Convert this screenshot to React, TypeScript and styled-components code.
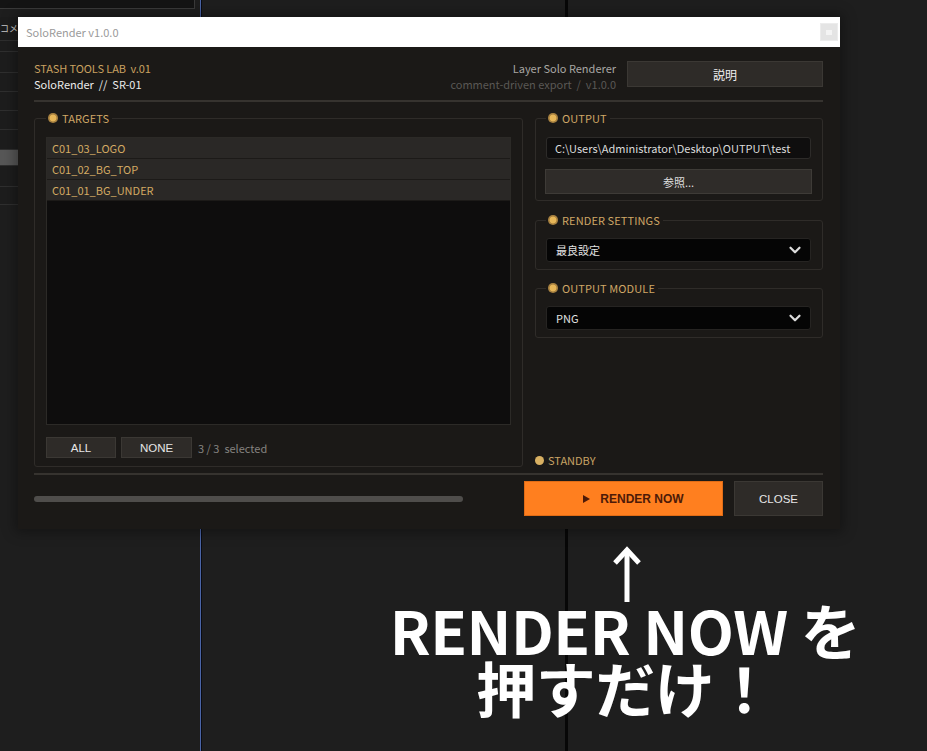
import React from "react";
import styled, { createGlobalStyle } from "styled-components";
import { ChevronDown } from "lucide-react";

const UI = `"Noto Sans CJK JP", "Noto Sans", sans-serif`;
const ARIAL = `"Liberation Sans", Arial, sans-serif`;

const GlobalStyle = createGlobalStyle`
  html, body { margin: 0; padding: 0; background: #1e1e1e; }
  body { width: 927px; height: 751px; overflow: hidden; }
  * { box-sizing: border-box; }
`;

const Desktop = styled.div`
  position: relative;
  width: 927px;
  height: 751px;
  background: #1e1e1e;
  overflow: hidden;
  font-family: ${UI};
`;

/* ---------- background application panels ---------- */
const TopLeftPanel = styled.div`
  position: absolute;
  left: 0;
  top: 0;
  width: 195px;
  height: 9px;
  background: #141414;
  border-right: 1px solid #3a3a3a;
  border-bottom: 1px solid #3a3a3a;
`;

const SidePanel = styled.div`
  position: absolute;
  left: 0;
  top: 17px;
  width: 18px;
  display: flex;
  flex-direction: column;
`;

const SideHeader = styled.div`
  height: 24px;
  display: flex;
  align-items: center;
  white-space: nowrap;
  font-family: ${UI};
  font-size: 9px;
  color: #c8c8c8;
  background: #1c1c1c;
  border-bottom: 1px solid #2e2e2e;
`;

const SideRow = styled.div<{ $h: number; $hl?: boolean }>`
  height: ${(p) => p.$h}px;
  background: ${(p) => (p.$hl ? "#575757" : "#1d1d1d")};
  border-bottom: 1px solid #2f2f2f;
`;

const VLine = styled.div<{ $x: number; $w: number; $c: string; $edge?: string }>`
  position: absolute;
  top: 0;
  bottom: 0;
  left: ${(p) => p.$x}px;
  width: ${(p) => p.$w}px;
  background: ${(p) => p.$c};
  border-left: ${(p) => (p.$edge ? `1px solid ${p.$edge}` : "none")};
`;

/* ---------- dialog window ---------- */
const Window = styled.div`
  position: absolute;
  left: 18px;
  top: 17px;
  width: 822px;
  display: flex;
  flex-direction: column;
  box-shadow: 0 0 12px 3px rgba(0, 0, 0, 0.35);
`;

const TitleBar = styled.div`
  height: 30px;
  background: #ffffff;
  display: flex;
  align-items: center;
  justify-content: space-between;
  padding: 0 2px 0 8px;
`;

const TitleText = styled.span`
  font-family: ${UI};
  font-size: 11px;
  color: #9a9a9a;
`;

const CloseBox = styled.div`
  width: 18px;
  height: 18px;
  background: #e4e4e4;
  border: 1px solid #ececec;
  display: flex;
  align-items: center;
  justify-content: center;
  &::after {
    content: "";
    width: 6px;
    height: 5px;
    background: #f4f4f4;
  }
`;

const Body = styled.div`
  background: #1b1917;
  padding: 13px 17px 13px 16px;
  display: flex;
  flex-direction: column;
`;

const Header = styled.div`
  height: 32px;
  display: flex;
  justify-content: space-between;
  align-items: flex-start;
`;

const Brand = styled.div`
  display: flex;
  flex-direction: column;
  font-size: 11px;
  line-height: 16px;
`;

const BrandTop = styled.span`
  color: #c9a160;
  white-space: pre;
  letter-spacing: -0.1px;
`;

const BrandSub = styled.span`
  color: #ececec;
  white-space: pre;
`;

const HeaderRight = styled.div`
  display: flex;
  gap: 11px;
  align-items: flex-start;
`;

const Meta = styled.div`
  display: flex;
  flex-direction: column;
  align-items: flex-end;
  font-size: 11px;
  line-height: 16px;
`;

const MetaTitle = styled.span`
  color: #a9a7a4;
`;

const MetaSub = styled.span`
  color: #5a5855;
  white-space: pre;
`;

const PlainButton = styled.button<{ $w?: number; $h: number; $arial?: boolean }>`
  width: ${(p) => (p.$w ? `${p.$w}px` : "100%")};
  height: ${(p) => p.$h}px;
  margin: 0;
  padding: 0;
  background: #2e2b28;
  border: 1px solid #3b3834;
  color: #e6e6e6;
  font-family: ${(p) => (p.$arial ? ARIAL : UI)};
  font-size: ${(p) => (p.$arial ? "11.5px" : "11px")};
  display: flex;
  align-items: center;
  justify-content: center;
  cursor: pointer;
`;

const HelpButton = styled(PlainButton)`
  margin-top: 1px;
  font-size: 12px;
  color: #f0f0f0;
`;

const Divider = styled.div<{ $mt: number; $mb: number }>`
  height: 2px;
  background: #36332f;
  margin-top: ${(p) => p.$mt}px;
  margin-bottom: ${(p) => p.$mb}px;
`;

const Main = styled.div`
  display: grid;
  grid-template-columns: 489px 288px;
  column-gap: 12px;
`;

const Group = styled.fieldset<{ $pad: string; $mt?: number }>`
  margin: ${(p) => p.$mt ?? 0}px 0 0 0;
  min-width: 0;
  border: 1px solid #2f2c29;
  border-radius: 3px;
  padding: ${(p) => p.$pad};
  display: flex;
  flex-direction: column;
`;

const Legend = styled.legend`
  padding: 0 3px 0 2px;
  display: flex;
  align-items: center;
  gap: 4px;
  font-size: 11px;
  line-height: 14px;
  color: #d0a766;
  letter-spacing: 0.1px;
`;

const Dot = styled.span`
  width: 10px;
  height: 10px;
  border-radius: 50%;
  background: radial-gradient(circle, #e6b658 0 45%, #a98240 52% 68%, #d9ad58 75% 100%);
  flex: none;
`;

const TargetList = styled.div`
  height: 288px;
  background: #0e0d0d;
  border: 1px solid #2c2a27;
  display: flex;
  flex-direction: column;
`;

const TargetRow = styled.div`
  height: 21px;
  background: #2a2826;
  border-bottom: 1px solid #1c1a18;
  display: flex;
  align-items: center;
  padding-left: 5px;
  font-size: 11px;
  color: #d3aa63;
`;

const ListActions = styled.div`
  margin-top: 12px;
  display: flex;
  align-items: center;
  gap: 5px;
`;

const SelectedCount = styled.span`
  margin-left: 1px;
  font-size: 11px;
  color: #858380;
  white-space: pre;
`;

const RightColumn = styled.div`
  display: flex;
  flex-direction: column;
`;

const PathInput = styled.div`
  height: 22px;
  background: #0f0e0e;
  border: 1px solid #2d2b29;
  border-radius: 3px;
  display: flex;
  align-items: center;
  padding-left: 8px;
  font-size: 11px;
  color: #dcdcdc;
  white-space: nowrap;
  overflow: hidden;
`;

const BrowseButton = styled(PlainButton)`
  margin-top: 10px;
  width: auto;
  margin-left: -1px;
  margin-right: -1px;
  background: #2f2c29;
  border-color: #3e3b37;
  color: #dedede;
`;

const Select = styled.div`
  height: 24px;
  background: #050505;
  border: 1px solid #262422;
  border-radius: 3px;
  display: flex;
  align-items: center;
  justify-content: space-between;
  padding: 0 6px 0 9px;
  font-size: 11px;
  color: #e2e2e2;
  svg {
    color: #dcdcdc;
  }
`;

const Status = styled.div`
  margin-top: auto;
  height: 14px;
  display: flex;
  align-items: center;
  gap: 4px;
  font-size: 11px;
  color: #c9a465;
`;

const StatusDot = styled.span`
  width: 9px;
  height: 9px;
  border-radius: 50%;
  background: #d8b062;
`;

const Footer = styled.div`
  display: flex;
  align-items: center;
  justify-content: space-between;
`;

const ProgressTrack = styled.div`
  width: 429px;
  height: 6px;
  border-radius: 3px;
  background: #4f4d4b;
`;

const FooterButtons = styled.div`
  display: flex;
  gap: 11px;
`;

const RenderButton = styled.button`
  width: 199px;
  height: 35px;
  margin: 0;
  padding: 0 0 0 20px;
  border: 1px solid #e06c16;
  background: #ff7f1f;
  color: #4d1a08;
  font-family: ${ARIAL};
  font-weight: 700;
  font-size: 12px;
  display: flex;
  align-items: center;
  justify-content: center;
  gap: 10px;
  cursor: pointer;
`;

const PlayMark = styled.span`
  width: 0;
  height: 0;
  border-left: 7px solid #4d1a08;
  border-top: 4px solid transparent;
  border-bottom: 4px solid transparent;
`;

/* ---------- caption overlay ---------- */
const Caption = styled.div`
  position: absolute;
  left: 380px;
  top: 546px;
  width: 490px;
  display: flex;
  flex-direction: column;
  align-items: center;
  font-family: "Noto Sans CJK JP", "Noto Sans", sans-serif;
  font-weight: 700;
  color: #ffffff;
`;

const ArrowIcon = styled.svg`
  display: block;
  width: 30px;
  height: 57px;
  margin-left: 4px;
  margin-bottom: -3px;
`;

const CaptionText = styled.div`
  font-size: 60px;
  line-height: 58px;
  text-align: center;
  white-space: pre;
  letter-spacing: -0.5px;
`;

const targets = ["C01_03_LOGO", "C01_02_BG_TOP", "C01_01_BG_UNDER"];

export default function App() {
  return (
    <Desktop>
      <GlobalStyle />
      <TopLeftPanel />
      <SidePanel>
        <SideHeader>コメ</SideHeader>
        <SideRow $h={11} />
        <SideRow $h={21} />
        <SideRow $h={19} />
        <SideRow $h={19} />
        <SideRow $h={19} />
        <SideRow $h={20} />
        <SideRow $h={16} $hl />
        <SideRow $h={21} />
        <SideRow $h={18} />
      </SidePanel>
      <VLine $x={200} $w={2} $c="#090a12" $edge="#4a64a6" />
      <VLine $x={565} $w={3} $c="#070707" />

      <Window>
        <TitleBar>
          <TitleText>SoloRender v1.0.0</TitleText>
          <CloseBox />
        </TitleBar>
        <Body>
          <Header>
            <Brand>
              <BrandTop>STASH TOOLS LAB  v.01</BrandTop>
              <BrandSub>SoloRender  //  SR-01</BrandSub>
            </Brand>
            <HeaderRight>
              <Meta>
                <MetaTitle>Layer Solo Renderer</MetaTitle>
                <MetaSub>comment-driven export  /  v1.0.0</MetaSub>
              </Meta>
              <HelpButton $w={196} $h={26}>説明</HelpButton>
            </HeaderRight>
          </Header>
          <Divider $mt={8} $mb={9} />
          <Main>
            <Group $pad="12px 11px 8px 11px">
              <Legend>
                <Dot />
                TARGETS
              </Legend>
              <TargetList>
                {targets.map((t) => (
                  <TargetRow key={t}>{t}</TargetRow>
                ))}
              </TargetList>
              <ListActions>
                <PlainButton $w={70} $h={21} $arial>ALL</PlainButton>
                <PlainButton $w={71} $h={21} $arial>NONE</PlainButton>
                <SelectedCount>3 / 3  selected</SelectedCount>
              </ListActions>
            </Group>
            <RightColumn>
              <Group $pad="12px 11px 6px 10px">
                <Legend>
                  <Dot />
                  OUTPUT
                </Legend>
                <PathInput>C:\Users\Administrator\Desktop\OUTPUT\test</PathInput>
                <BrowseButton $h={25}>参照...</BrowseButton>
              </Group>
              <Group $pad="11px 11px 7px 10px" $mt={12}>
                <Legend>
                  <Dot />
                  RENDER SETTINGS
                </Legend>
                <Select>
                  <span>最良設定</span>
                  <ChevronDown size={18} strokeWidth={3} />
                </Select>
              </Group>
              <Group $pad="11px 11px 7px 10px" $mt={11}>
                <Legend>
                  <Dot />
                  OUTPUT MODULE
                </Legend>
                <Select>
                  <span>PNG</span>
                  <ChevronDown size={18} strokeWidth={3} />
                </Select>
              </Group>
              <Status>
                <StatusDot />
                STANDBY
              </Status>
            </RightColumn>
          </Main>
          <Divider $mt={6} $mb={6} />
          <Footer>
            <ProgressTrack />
            <FooterButtons>
              <RenderButton>
                <PlayMark />
                RENDER NOW
              </RenderButton>
              <PlainButton $w={89} $h={35} $arial>CLOSE</PlainButton>
            </FooterButtons>
          </Footer>
        </Body>
      </Window>

      <Caption>
        <ArrowIcon viewBox="0 0 30 57" fill="none" stroke="#ffffff" strokeWidth={5}>
          <path d="M15 5 V56" strokeLinecap="butt" />
          <path d="M3 17 L15 4 L27 17" strokeLinejoin="miter" strokeLinecap="butt" />
        </ArrowIcon>
        <CaptionText>
          {"RENDER NOW を"}
          <br />
          {"押すだけ！"}
        </CaptionText>
      </Caption>
    </Desktop>
  );
}
